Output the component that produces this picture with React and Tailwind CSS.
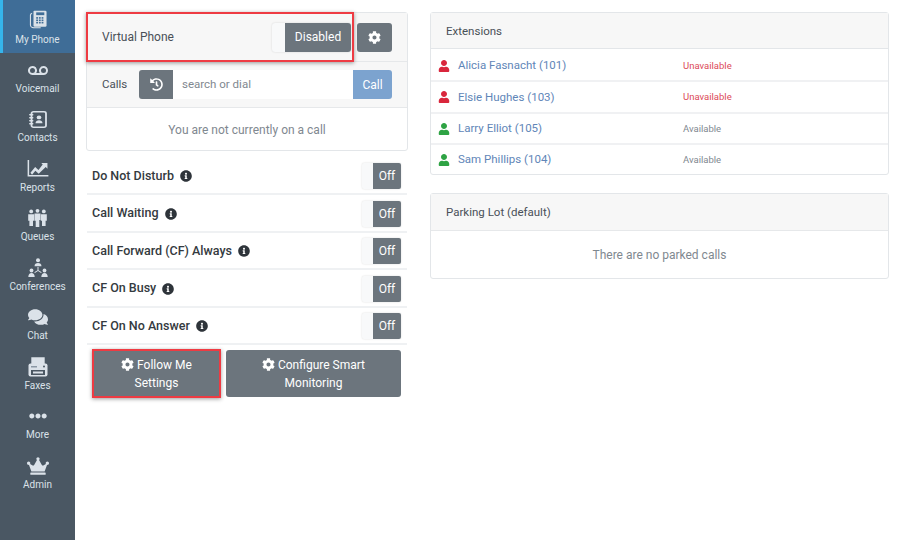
import React from "react";
import { FaCog, FaHistory, FaInfoCircle, FaUser, FaEllipsisH, FaCrown, FaVoicemail, FaComments } from "react-icons/fa";

const PhoneIcon = () => (
  <svg width="18" height="19" viewBox="0 0 20 24" preserveAspectRatio="none" fill="currentColor">
    <path d="M6 1h12a1.500 1.500 0 0 1 1.500 1.500v17a1.500 1.500 0 0 1-1.500 1.500H6.500A1.500 1.500 0 0 1 5 19.500V2a1 1 0 0 1 1-1z" />
    <path d="M3.500 3.500C1.500 4 1 5.500 1 7v12c0 2.500 2 4 4 4h8v-1.200H5.500C3.500 21.800 2.200 20.800 2.200 19V7c0-1 .5-2 1.300-2.300z" />
    <g fill="#3f6d97">
      <rect x="8" y="3" width="9" height="3.500" />
      <rect x="8" y="9" width="2" height="2" /><rect x="11" y="9" width="2" height="2" /><rect x="14" y="9" width="2" height="2" />
      <rect x="8" y="12" width="2" height="2" /><rect x="11" y="12" width="2" height="2" /><rect x="14" y="12" width="2" height="2" />
      <rect x="8" y="15" width="2" height="2" /><rect x="11" y="15" width="2" height="2" /><rect x="14" y="15" width="2" height="2" />
    </g>
  </svg>
);
const ContactsIcon = () => (
  <svg width="19" height="17" viewBox="0 0 19 20" preserveAspectRatio="none">
    <rect x="3.500" y="1" width="14.500" height="18" rx="2" fill="none" stroke="currentColor" strokeWidth="1.800" />
    <g fill="currentColor">
      <rect x="1" y="3.500" width="4.500" height="1.800" rx=".9" /><rect x="1" y="7" width="4.500" height="1.800" rx=".9" />
      <rect x="1" y="10.500" width="4.500" height="1.800" rx=".9" /><rect x="1" y="14" width="4.500" height="1.800" rx=".9" />
      <circle cx="11" cy="7.500" r="2.300" /><path d="M7.500 14.500c0-2.400 1.500-3.500 3.500-3.500s3.500 1.100 3.500 3.500z" />
    </g>
  </svg>
);
const ReportsIcon = () => (
  <svg width="22" height="17" viewBox="0 0 22 18" fill="currentColor">
    <path d="M0 0h1.600v15.800H22V17.500H0z" />
    <path d="M3 13.500l5-6 3.500 3L16 4.800 14.500 3.300H21v6l-1.800-1.800-7.500 7-3.500-3-3.500 4z" />
  </svg>
);
const QueuesIcon = () => (
  <svg width="19" height="20" viewBox="0 0 19 20" fill="currentColor">
    {[3.200, 9.500, 15.800].map((x) => (
      <g key={x}>
        <circle cx={x} cy={x === 9.500 ? 2.800 : 3.400} r="1.900" />
        <path d={`M${x - 3} ${x === 9.500 ? 5.500 : 6.200}h6v6.500h-1.200V${x === 9.500 ? 19 : 18}h-3.600v-${x === 9.500 ? 6.300 : 5.300}H${x - 3}z`} />
      </g>
    ))}
  </svg>
);
const ConferencesIcon = () => (
  <svg width="20" height="20" viewBox="0 0 20 20" fill="currentColor">
    <circle cx="10" cy="2.200" r="2" /><path d="M6.500 8.200c0-2 1.500-3.200 3.500-3.200s3.500 1.200 3.500 3.200z" />
    <circle cx="3.500" cy="12.500" r="1.900" /><path d="M.3 19c0-2.500 1.400-4 3.200-4s3.200 1.500 3.200 4z" />
    <circle cx="16.500" cy="12.500" r="1.900" /><path d="M13.300 19c0-2.500 1.400-4 3.200-4s3.200 1.500 3.200 4z" />
    <path d="M9.500 9h1v3.200l3.200 2-.6.8-3.100-2-3.100 2-.6-.8 3.200-2z" />
  </svg>
);
const FaxIcon = () => (
  <svg width="20" height="20" viewBox="0 0 20 20">
    <path d="M4 7V1h12v6" fill="#dbe2e9" stroke="currentColor" strokeWidth="1.400" />
    <rect x=".5" y="6.500" width="19" height="13" rx="2" fill="currentColor" />
    <rect x="3" y="13" width="14" height="5" fill="#4a5763" />
    <rect x="5" y="14.500" width="10" height="2" fill="currentColor" />
    <circle cx="16" cy="9.500" r="1" fill="#4a5763" />
    <rect x="3" y="9" width="6" height="1.500" fill="#8b98a5" />
  </svg>
);

const nav = [
  { label: "My Phone", icon: <PhoneIcon />, active: true },
  { label: "Voicemail", icon: <FaVoicemail size={20} /> },
  { label: "Contacts", icon: <ContactsIcon /> },
  { label: "Reports", icon: <ReportsIcon /> },
  { label: "Queues", icon: <QueuesIcon /> },
  { label: "Conferences", icon: <ConferencesIcon /> },
  { label: "Chat", icon: <FaComments size={20} /> },
  { label: "Faxes", icon: <FaxIcon /> },
  { label: "More", icon: <FaEllipsisH size={18} /> },
  { label: "Admin", icon: <FaCrown size={22} /> },
];

const toggles = ["Do Not Disturb", "Call Waiting", "Call Forward (CF) Always", "CF On Busy", "CF On No Answer"];
const exts = [
  { name: "Alicia Fasnacht (101)", on: false },
  { name: "Elsie Hughes (103)", on: false },
  { name: "Larry Elliot (105)", on: true },
  { name: "Sam Phillips (104)", on: true },
];

function App() {
  return (
    <div className="flex h-[540px] w-[900px] overflow-hidden bg-white font-['Roboto','Open_Sans',sans-serif] text-[12px] text-[#495057]">
      <nav className="w-[75px] shrink-0 bg-[#4a5763] text-[#dbe2e9]">
        {nav.map((n) => (
          <div
            key={n.label}
            className={
              n.active
                ? "flex h-[53px] flex-col items-center justify-end border-l-[3px] border-[#35b5ec] bg-[#3f6d97] pb-[6px] pr-[3px]"
                : "flex h-[49.500px] flex-col items-center justify-end pb-[7px]"
            }
          >
            <div className="flex h-[26px] items-center justify-center">{n.icon}</div>
            <div className={n.active ? "mt-[1px] text-[10px] leading-[14px]" : "mt-[-1px] text-[10px] leading-[14px]"}>{n.label}</div>
          </div>
        ))}
      </nav>

      <section className="ml-[11px] mt-[12px] w-[322px] shrink-0">
        <div className="relative rounded-[3px] border border-[#e3e6e9]">
          <div className="flex h-[48px] items-center bg-[#f7f7f7] pl-[15px] pr-[15px]">
            <span className="text-[12px]">Virtual Phone</span>
            <div className="ml-auto flex h-[29px] w-[79px] overflow-hidden rounded-[3px] bg-[#f8f9fa] shadow-[0_0_2px_rgba(0,0,0,0.15)]">
              <div className="w-[13px]" />
              <div className="flex flex-1 items-center justify-center bg-[#6c757d] text-[12px] text-white">Disabled</div>
            </div>
            <button className="ml-[6px] flex h-[29px] w-[35px] items-center justify-center rounded-[3px] bg-[#6c757d] text-white">
              <FaCog size={13} />
            </button>
          </div>
          <div className="flex h-[47px] items-center border-t border-b border-[#e6e8ea] bg-[#f7f7f7] pl-[15px] pr-[15px]">
            <span className="w-[37px] text-[11.500px]">Calls</span>
            <div className="flex h-[29px] flex-1 overflow-hidden rounded-[3px]">
              <div className="flex w-[34px] items-center justify-center bg-[#6c757d] text-white"><FaHistory size={13} /></div>
              <div className="flex flex-1 items-center bg-white pl-[9px] pt-[1px] text-[11.500px] text-[#7f8890]">search or dial</div>
              <div className="flex w-[39px] items-center justify-center bg-[#7ca3cf] text-[12px] text-white">Call</div>
            </div>
          </div>
          <div className="flex h-[42px] items-center justify-center pt-[2px] text-[12px] text-[#7f8890]">You are not currently on a call</div>
          <div className="pointer-events-none absolute left-[-1px] top-[-1px] h-[50px] w-[268px] border-2 border-[#ee3b43] shadow-[0_1px_4px_rgba(0,0,0,0.4)]" />
        </div>

        <div className="mt-[6.500px] px-[1px]">
          {toggles.map((t) => (
            <div key={t} className="flex h-[37.500px] items-center border-b-2 border-[#eff1f3] pl-[5px] pr-[6px] pt-[2px]">
              <span className="text-[12.500px] font-medium text-[#343a40]">{t}</span>
              <FaInfoCircle size={12} className="ml-[6px] text-[#2e343a]" />
              <div className="ml-auto flex h-[26px] w-[39px] overflow-hidden rounded-[2px] bg-[#f8f9fa] shadow-[0_0_2px_rgba(0,0,0,0.15)]">
                <div className="w-[11px]" />
                <div className="flex flex-1 items-center justify-center bg-[#6c757d] text-[12px] text-white">Off</div>
              </div>
            </div>
          ))}
        </div>

        <div className="ml-[7px] mt-[5px] flex w-[308px] gap-[6px]">
          <button className="relative h-[47px] w-[127px] rounded-[3px] bg-[#6c757d] px-[12px] text-[12px] leading-[18px] text-white">
            <FaCog size={13} className="mr-[3px] inline align-[-2px]" />Follow Me<br />Settings
            <span className="pointer-events-none absolute left-[-1px] top-[-1px] h-[49px] w-[129px] border-2 border-[#ee3b43] shadow-[0_1px_4px_rgba(0,0,0,0.4)]" />
          </button>
          <button className="h-[47px] flex-1 rounded-[3px] bg-[#6c757d] px-[12px] text-[12px] leading-[18px] text-white">
            <FaCog size={13} className="mr-[3px] inline align-[-2px]" />Configure Smart<br />Monitoring
          </button>
        </div>
      </section>

      <section className="ml-[22px] mt-[12px] w-[459px] shrink-0">
        <div className="rounded-[3px] border border-[#e3e6e9]">
          <div className="flex h-[36px] items-center border-b border-[#e3e6e9] bg-[#f7f7f7] pl-[15px] pt-[2px] text-[11.500px]">Extensions</div>
          {exts.map((e, i) => (
            <div key={e.name} className={i ? "flex h-[31.250px] items-center border-t-2 border-[#f0f1f3] pl-[7px] pt-[1px]" : "flex h-[31.250px] items-center pl-[7px] pt-[2px]"}>
              <FaUser size={12} className={e.on ? "text-[#2ea344]" : "text-[#d9263c]"} />
              <span className="ml-[8px] w-[225px] text-[11.500px] text-[#5f86b8]">{e.name}</span>
              <span className={e.on ? "text-[9.500px] text-[#7f8890]" : "text-[9.500px] text-[#dc4a58]"}>{e.on ? "Available" : "Unavailable"}</span>
            </div>
          ))}
        </div>
        <div className="mt-[18px] rounded-[3px] border border-[#e3e6e9]">
          <div className="flex h-[37px] items-center border-b border-[#e6e8ea] bg-[#f7f7f7] pl-[15px] pt-[1px] text-[11.500px]">Parking Lot (default)</div>
          <div className="flex h-[47px] items-center justify-center pt-[1px] text-[12px] text-[#7f8890]">There are no parked calls</div>
        </div>
      </section>
    </div>
  );
}

export default App;
